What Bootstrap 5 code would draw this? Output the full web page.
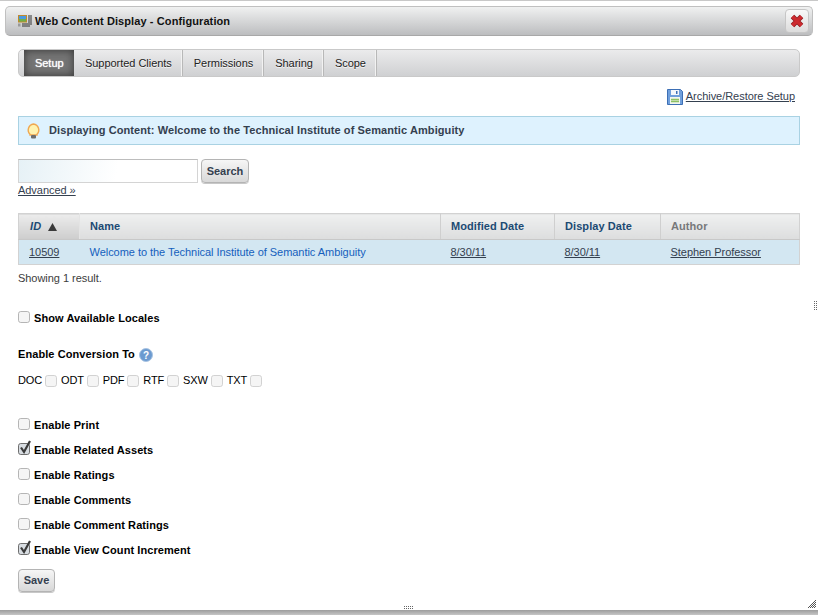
<!doctype html>
<html lang="en">
<head>
    <meta charset="utf-8">
    <title>Web Content Display - Configuration</title>
    <meta name="viewport" content="width=device-width, initial-scale=1">
    <link href="https://cdn.jsdelivr.net/npm/bootstrap@5.3.3/dist/css/bootstrap.min.css" rel="stylesheet">
    <style>
        html, body { height: 615px; overflow: hidden; }
        body {
            font-family: "Liberation Sans", Arial, sans-serif;
            font-size: 11px;
            line-height: 15px;
            letter-spacing: -.04px;
            color: #000;
            background: #fff;
        }
        a { color: #34404f; }
        .dialog-box {
            position: relative;
            height: 610px;
            border-top: 1px solid #c8c8c8;
            padding: 5px 5px 0;
        }
        .dialog-edge { height: 5px; background: linear-gradient(#9c9c9c, #c6c6c6); }
        .dialog-head {
            height: 30px;
            padding: 0 3px 0 12px;
            border: 1px solid #c0c0c0;
            border-bottom-color: #a8a8a8;
            border-radius: 5px;
            background: linear-gradient(#f0f1f1, #bcbdbf);
            font-weight: 700;
            letter-spacing: .1px;
            color: #111;
        }
        .dialog-head svg { margin-right: 3px; }
        .dialog-close {
            width: 24px;
            height: 24px;
            padding: 0;
            border: 1px solid #c6c6c6;
            border-radius: 4px;
            background: linear-gradient(#f8f8f8, #dcdcdc);
        }
        .dialog-close svg { margin: 0; }
        .dialog-body { padding: 13px 13px 0; }
        .tab-strip {
            height: 28px;
            padding-left: 5px;
            border: 1px solid #c9c9c9;
            border-radius: 5px;
            background: linear-gradient(#ebebec, #cfd0d2);
        }
        .tab-strip a {
            display: flex;
            align-items: center;
            height: 26px;
            padding: 0 10px 0 11px;
            border-right: 1px solid #b8b8b8;
            box-shadow: inset -1px 0 0 #f2f2f2;
            color: #222;
            text-decoration: none;
            text-shadow: 0 1px 0 #f4f4f4;
        }
        .tab-strip a.active {
            width: 50px;
            color: #fff;
            border-right: 0;
            box-shadow: inset 0 0 8px #333;
            background: #757575;
            text-shadow: 0 0 1px #fff;
        }
        .archive-row { height: 39px; padding-right: 5px; }
        .archive-row svg { margin-right: 3px; }
        .info-strip {
            height: 29px;
            padding-left: 7px;
            border: 1px solid #a9d2e3;
            background: #def2fe;
            font-weight: 700;
            letter-spacing: .09px;
            color: #34404f;
        }
        .search-row { margin-top: 14px; }
        .search-input {
            width: 180px;
            height: 24px;
            border: 1px solid #d4d4d4;
            border-top-color: #bdbdbd;
            border-radius: 0;
            padding: 2px;
            background: linear-gradient(100deg, #e6f1f6, #fff 55%);
        }
        .grey-btn {
            font-size: 11px;
            line-height: 15px;
            font-weight: 700;
            color: #34404f;
            border: 1px solid #b4b4b4;
            border-radius: 4px;
            background: linear-gradient(#f6f6f6, #d8d8d8);
            box-shadow: 0 1px 0 #c8c8c8;
        }
        .search-btn { height: 24px; width: 48px; padding: 0; margin-left: 3px; }
        .save-btn { height: 23px; width: 37px; padding: 0; margin-top: 6px; }
        .result-table {
            width: 782px;
            table-layout: fixed;
            margin: 15px 0 0;
            border: 1px solid #d2d2d2;
        }
        .result-table th {
            height: 26px;
            padding: 0 0 0 10px;
            background: linear-gradient(#eff0f0, #dcddde);
            border-bottom: 1px solid #c8c8c8;
            border-right: 1px solid #cfcfcf;
            color: #1c4a73;
            font-weight: 700;
            letter-spacing: .08px;
            vertical-align: middle;
        }
        .result-table th.sorted {
            padding-left: 11px;
            background: linear-gradient(#ececec, #cdcdcd);
            border-right-color: #e4e4e4;
            font-style: italic;
        }
        .result-table th.plain-head { color: #77787a; border-right: 0; }
        .result-table td {
            height: 25px;
            padding: 0 0 0 10px;
            background: #d3e7f2;
            border: 0;
            vertical-align: middle;
        }
        .blue-link { color: #1560bd; text-decoration: none; }
        .results-note { margin-top: 6px; color: #3c3c3c; }
        .tick {
            width: 12px;
            height: 12px;
            margin: 0;
            border: 1px solid #b5b5b5;
            border-radius: 3px;
            background-color: #f5f5f5;
            flex: none;
        }
        .tick:checked {
            background-color: #d8dde2;
            border-color: #6e6e6e;
            background-image: none;
        }
        .option-row {
            height: 25px;
            font-weight: 700;
            letter-spacing: .08px;
            position: relative;
        }
        .option-row .tick { margin: 0 4px 3px 0; }
        .tick-mark { position: absolute; left: 0; top: 1px; }
        .locales-toggle { margin-top: 20px; }
        .conversion-label { margin-top: 16px; font-weight: 700; letter-spacing: .08px; }
        .conversion-label svg { margin-left: 4px; }
        .locale-row { margin-top: 11px; letter-spacing: -.15px; }
        .locale-row span { margin-right: 3px; }
        .locale-row .tick { margin-right: 4px; border-color: #d2d2d2; }
        .option-list { margin-top: 25px; }
        .grip-side { position: absolute; right: 1px; top: 300px; }
        .grip-bottom { position: absolute; left: 404px; bottom: 1px; }
        .grip-corner { position: absolute; right: 2px; bottom: 2px; }
    </style>
</head>
<body>
<div class="dialog-box">
    <!-- title bar -->
    <div class="dialog-head d-flex align-items-center justify-content-between">
        <span class="d-flex align-items-center">
            <svg width="14" height="12" viewBox="0 0 14 12">
                <rect x=".5" y=".5" width="8" height="6.500" fill="#6fb04a" stroke="#c08a2c"/>
                <rect x="1" y="1" width="7" height="3" fill="#4a9ae0"/>
                <path d="M10 1h4M10 3h4M10 5h4M10 7h4M4 9h10M4 11h8" stroke="#333"/>
                <rect x="0" y="8.500" width="2.500" height="3" fill="#999"/>
            </svg>
            <span>Web Content Display - Configuration</span>
        </span>
        <button type="button" class="dialog-close d-flex align-items-center justify-content-center" aria-label="Close">
            <svg width="14" height="14" viewBox="0 0 14 14">
                <path d="M2.500 2.500L11.500 11.500M11.500 2.500L2.500 11.500" stroke="#8e1c20" stroke-width="5"/>
                <path d="M2.500 2.500L11.500 11.500M11.500 2.500L2.500 11.500" stroke="#cc2a2f" stroke-width="3.600"/>
            </svg>
        </button>
    </div>

    <div class="dialog-body">
        <!-- tabs -->
        <nav class="tab-strip d-flex">
            <a class="active" href="#">Setup</a>
            <a href="#">Supported Clients</a>
            <a href="#">Permissions</a>
            <a href="#">Sharing</a>
            <a href="#">Scope</a>
        </nav>

        <div class="archive-row d-flex align-items-center justify-content-end">
            <svg width="16" height="16" viewBox="0 0 16 16">
                <path d="M.5.500h13l2 2v13H.5z" fill="#6f9fdc" stroke="#3d6fb5"/>
                <rect x="4" y="1" width="8" height="5" fill="#f4f7fb"/>
                <rect x="9" y="2" width="1.500" height="3" fill="#3d6fb5"/>
                <rect x="3" y="8" width="10" height="7" fill="#f2f6ee"/>
                <path d="M4 10.500h8M4 12.500h8" stroke="#8cc063" stroke-width="1.500"/>
            </svg>
            <a href="#">Archive/Restore Setup</a>
        </div>

        <div class="info-strip d-flex align-items-center gap-2">
            <svg width="15" height="16" viewBox="0 0 15 16">
                <path d="M7.500 1a6 6 0 0 1 3.500 10.200V12H4v-.8A6 6 0 0 1 7.500 1z" fill="#fff3b0" stroke="#f0a850" stroke-width="1.400"/>
                <rect x="5" y="12" width="5" height="3.500" rx="1" fill="#6e6e6e"/>
            </svg>
            <span>Displaying Content: Welcome to the Technical Institute of Semantic Ambiguity</span>
        </div>

        <!-- search -->
        <div class="search-row d-flex">
            <input type="text" class="form-control search-input" aria-label="Search">
            <button type="button" class="btn grey-btn search-btn">Search</button>
        </div>
        <div><a href="#">Advanced »</a></div>

        <!-- results -->
        <table class="table result-table">
            <colgroup>
                <col style="width:61px"><col style="width:361px"><col style="width:114px"><col style="width:106px"><col>
            </colgroup>
            <thead>
                <tr>
                    <th class="sorted">ID <svg width="9" height="8" viewBox="0 0 9 8" class="ms-1"><path d="M4.500 0L9 8H0z" fill="#3a3a3a"/></svg></th>
                    <th>Name</th>
                    <th>Modified Date</th>
                    <th>Display Date</th>
                    <th class="plain-head">Author</th>
                </tr>
            </thead>
            <tbody>
                <tr>
                    <td><a href="#">10509</a></td>
                    <td><a class="blue-link" href="#">Welcome to the Technical Institute of Semantic Ambiguity</a></td>
                    <td><a href="#">8/30/11</a></td>
                    <td><a href="#">8/30/11</a></td>
                    <td><a href="#">Stephen Professor</a></td>
                </tr>
            </tbody>
        </table>
        <div class="results-note">Showing 1 result.</div>

        <div class="option-row locales-toggle d-flex align-items-center">
            <input class="form-check-input tick" type="checkbox" aria-label="Show Available Locales">
            <span>Show Available Locales</span>
        </div>

        <div class="conversion-label d-flex align-items-center">
            <span>Enable Conversion To</span>
            <svg width="14" height="14" viewBox="0 0 14 14">
                <circle cx="7" cy="7" r="6.500" fill="#6b9ad0" stroke="#a9c4e2"/>
                <text x="7" y="10.500" font-size="10" font-weight="700" text-anchor="middle" fill="#fff">?</text>
            </svg>
        </div>

        <div class="locale-row d-flex align-items-center">
            <span>DOC</span><input class="form-check-input tick" type="checkbox" aria-label="DOC">
            <span>ODT</span><input class="form-check-input tick" type="checkbox" aria-label="ODT">
            <span>PDF</span><input class="form-check-input tick" type="checkbox" aria-label="PDF">
            <span>RTF</span><input class="form-check-input tick" type="checkbox" aria-label="RTF">
            <span>SXW</span><input class="form-check-input tick" type="checkbox" aria-label="SXW">
            <span>TXT</span><input class="form-check-input tick" type="checkbox" aria-label="TXT">
        </div>

        <div class="option-list">
            <div class="option-row d-flex align-items-center"><input class="form-check-input tick" type="checkbox" aria-label="Enable Print"><span>Enable Print</span></div>
            <div class="option-row d-flex align-items-center"><input class="form-check-input tick" type="checkbox" checked aria-label="Enable Related Assets"><svg class="tick-mark" width="14" height="16" viewBox="0 0 14 16"><path d="M3 8.500l3 4.500 6-11" fill="none" stroke="#3a3a3a" stroke-width="2.200"/></svg><span>Enable Related Assets</span></div>
            <div class="option-row d-flex align-items-center"><input class="form-check-input tick" type="checkbox" aria-label="Enable Ratings"><span>Enable Ratings</span></div>
            <div class="option-row d-flex align-items-center"><input class="form-check-input tick" type="checkbox" aria-label="Enable Comments"><span>Enable Comments</span></div>
            <div class="option-row d-flex align-items-center"><input class="form-check-input tick" type="checkbox" aria-label="Enable Comment Ratings"><span>Enable Comment Ratings</span></div>
            <div class="option-row d-flex align-items-center"><input class="form-check-input tick" type="checkbox" checked aria-label="Enable View Count Increment"><svg class="tick-mark" width="14" height="16" viewBox="0 0 14 16"><path d="M3 8.500l3 4.500 6-11" fill="none" stroke="#3a3a3a" stroke-width="2.200"/></svg><span>Enable View Count Increment</span></div>
        </div>

        <button type="button" class="btn grey-btn save-btn">Save</button>
    </div>

    <svg class="grip-side" width="3" height="10" viewBox="0 0 3 10"><path d="M.5 0v10M2.500 0v10" stroke="#666" stroke-dasharray="1 1"/></svg>
    <svg class="grip-bottom" width="10" height="3" viewBox="0 0 10 3"><path d="M0 .5h10M0 2.500h10" stroke="#666" stroke-dasharray="1 1"/></svg>
    <svg class="grip-corner" width="8" height="8" viewBox="0 0 8 8"><path d="M7 .5h1M6 1.500h2M5 2.500h3M4 3.500h4M3 4.500h5M2 5.500h6M1 6.500h7M0 7.500h8" stroke="#555" stroke-dasharray="1 1"/></svg>
</div>
<div class="dialog-edge"></div>
<script src="https://cdn.jsdelivr.net/npm/bootstrap@5.3.3/dist/js/bootstrap.bundle.min.js"></script>
</body>
</html>
